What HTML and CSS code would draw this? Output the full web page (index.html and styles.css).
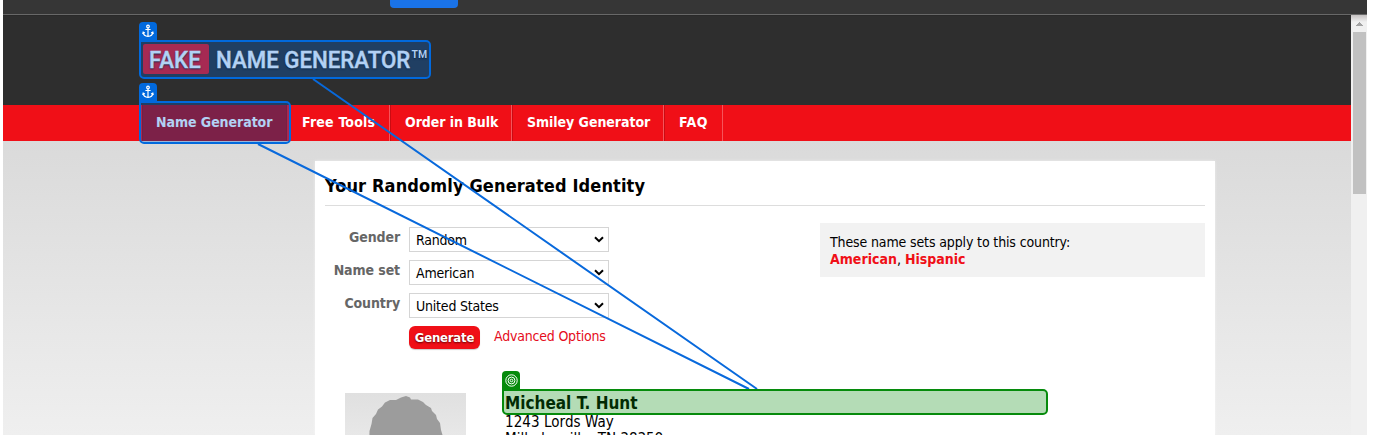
FILE: index.html
```
<!DOCTYPE html>
<html lang="en">
<head>
<meta charset="utf-8">
<title>Fake Name Generator</title>
<link rel="stylesheet" href="styles.css">
</head>
<body>
<div class="window">
  <div class="toolbar"><div class="tab"></div></div>
  <div class="viewport">
    <div class="page">
      <header class="header">
        <div class="logo"><span class="logo-fake"><span class="logo-text">FAKE</span></span><span class="logo-name"><span class="logo-text">NAME GENERATOR</span></span><span class="logo-tm">™</span></div>
      </header>
      <nav class="nav">
        <a class="nav-item active">Name Generator</a>
        <a class="nav-item tools">Free Tools</a>
        <a class="nav-item bulk">Order in Bulk</a>
        <a class="nav-item smiley">Smiley Generator</a>
        <a class="nav-item faq">FAQ</a>
      </nav>
      <main class="main">
        <section class="card">
          <h1 class="title">Your Randomly Generated Identity</h1>
          <div class="columns">
            <form class="form">
              <div class="row"><label class="label">Gender</label><div class="select"><span>Random</span><svg class="chevron" viewBox="0 0 10 7"><path d="M1 1.2l4 4 4-4"/></svg></div></div>
              <div class="row"><label class="label">Name set</label><div class="select"><span>American</span><svg class="chevron" viewBox="0 0 10 7"><path d="M1 1.2l4 4 4-4"/></svg></div></div>
              <div class="row"><label class="label">Country</label><div class="select"><span>United States</span><svg class="chevron" viewBox="0 0 10 7"><path d="M1 1.2l4 4 4-4"/></svg></div></div>
              <div class="actions"><span class="generate">Generate</span><a class="advanced">Advanced Options</a></div>
            </form>
            <aside class="note">
              <div class="note-text">These name sets apply to this country:</div>
              <div><b>American</b>, <b>Hispanic</b></div>
            </aside>
          </div>
          <div class="identity">
            <svg class="avatar" viewBox="0 0 121 60">
              <defs><linearGradient id="silver" x1="0" y1="0" x2="0" y2="1"><stop offset="0" stop-color="#e0e0e0"/><stop offset="1" stop-color="#ebebeb"/></linearGradient></defs>
              <path fill="url(#silver)" d="M0 0h121v60H0z"/>
              <path fill="#9c9c9c" d="M24 60L24.500 38L26.500 31L27.500 25L31 21L33 16.500L37 13.500L40 9.500L45 7L51 7L56 4.500L61 3L65 4.500L66 6.500L73 6.500L78 9L81 12L86 15L87 18L91 22L92 26L95 30L96 37L97.500 42V60z"/>
            </svg>
            <div class="address"><div class="person">Micheal T. Hunt</div><div>1243 Lords Way</div><div class="city">Milledgeville, TN 38359</div></div>
          </div>
        </section>
      </main>
    </div>
    <div class="scrollbar"><svg class="arrow" viewBox="0 0 7 4"><path d="M3 0h1v1h1v1h1v1h1v1H0V3h1V2h1V1h1z"/></svg><div class="thumb"></div></div>
  </div>
</div>

<svg class="links" viewBox="0 0 1378 435"><path d="M313 79L757 389M258 144L749 389"/></svg>
<div class="outline outline-logo"><span class="marker"><svg viewBox="0 0 12 14"><circle cx="6" cy="2.500" r="1.300"/><path d="M6 4v8.300M3.400 5.500h5.200M1.200 8.300c.2 2.600 2 4 4.800 4.200 2.800-.2 4.600-1.600 4.800-4.200M.7 10l.5-1.900 1.700 1M11.300 10l-.5-1.900-1.700 1"/></svg></span></div>
<div class="outline outline-nav"><span class="marker"><svg viewBox="0 0 12 14"><circle cx="6" cy="2.500" r="1.300"/><path d="M6 4v8.300M3.400 5.500h5.200M1.200 8.300c.2 2.600 2 4 4.800 4.200 2.800-.2 4.600-1.600 4.800-4.200M.7 10l.5-1.900 1.700 1M11.300 10l-.5-1.900-1.700 1"/></svg></span></div>
<div class="outline outline-target"><span class="marker marker-target"><svg viewBox="0 0 13 13"><circle cx="6.500" cy="6.500" r="5.700"/><circle cx="6.500" cy="6.500" r="3.400"/><circle cx="6.500" cy="6.500" r="1.300"/></svg></span></div>
</body>
</html>
```
FILE: styles.css
```
* { box-sizing: border-box; }
html, body { margin: 0; height: 435px; overflow: hidden; background: #fff; }
body { position: relative; width: 1378px; font: 14px/17px "DejaVu Sans Condensed", "DejaVu Sans", sans-serif; font-stretch: condensed; color: #000; white-space: nowrap; }
.window { width: 1364px; height: 435px; margin-left: 3px; overflow: hidden; }
.toolbar { height: 15px; background: #363636; border-bottom: 1px solid #686868; padding-left: 387px; }
.tab { width: 68px; height: 8px; background: #1a73e8; border-radius: 0 0 4px 4px; }
.viewport { display: flex; height: 420px; }
.page { width: 1348px; }
.header { height: 90px; background: #2e2e2e; border-top: 1px solid #292929; padding: 28px 0 0 140px; }
.logo { display: flex; align-items: flex-start; color: #fff; font: 500 24px/32px Roboto, sans-serif; text-shadow: 0 1px 2px #000; }
.logo-fake { width: 66px; height: 30px; padding-left: 6px; border-radius: 2px; background: #ee1018; }
.logo-name { width: 194px; margin-left: 7px; }
.logo-text { display: inline-block; transform: scaleX(.927); transform-origin: 0 0; -webkit-text-stroke: .4px #fff; }
.logo-tm { font-size: 31px; font-weight: 400; line-height: 35px; }
.nav { display: flex; height: 36px; padding-left: 139px; background: #f00f17; color: #fff; font-weight: bold; line-height: 34px; }
.nav-item { display: block; padding-left: 14px; border-right: 1px solid #f6545a; border-left: 1px solid #ca0b12; letter-spacing: -.05px; }
.nav-item.active { width: 145px; padding-left: 13px; background: #b20408; border-color: #a00; }
.nav-item.tools { width: 103px; padding-left: 15px; border-left: 0; letter-spacing: .2px; }
.nav-item.bulk { width: 122px; }
.nav-item.smiley { width: 152px; }
.nav-item.faq { width: 59px; letter-spacing: .5px; }
.main { height: 294px; padding: 20px 0 0 312px; background: linear-gradient(#dadada, #efefef); }
.card { width: 900px; height: 274px; padding: 0 10px; background: #fff; box-shadow: 0 0 3px rgba(255,255,255,.5); }
.title { margin: 0; height: 45px; padding-top: 12px; border-bottom: 1px solid #ddd; font-size: 18px; line-height: 25px; letter-spacing: .13px; }
.columns { display: flex; justify-content: space-between; height: 165px; padding-top: 17px; }
.form { width: 300px; padding-top: 4px; }
.row { display: flex; height: 33px; }
.label { width: 75px; margin-right: 9px; text-align: right; font-weight: bold; line-height: 20px; letter-spacing: -.1px; color: #666; }
.select { display: flex; justify-content: space-between; align-items: center; width: 200px; height: 25px; padding: 0 4px 0 6px; border: 1px solid #d5d5d5; letter-spacing: -.2px; }
.select span { padding-top: 2px; }
.chevron { width: 10px; height: 7px; fill: none; stroke: #000; stroke-width: 2; }
.actions { display: flex; padding-left: 84px; }
.generate { width: 71px; height: 23px; margin-right: 14px; border-radius: 6px; background: #f00f17; color: #fff; font-weight: bold; font-size: 13px; line-height: 23px; letter-spacing: -.2px; text-align: center; text-shadow: 0 1px 2px #600; box-shadow: 0 1px 1px #ccc; }
.advanced { line-height: 20px; letter-spacing: -.2px; color: #e50c20; }
.note { width: 385px; height: 54px; padding: 11px 10px; background: #f2f2f2; }
.note-text { letter-spacing: -.13px; }
.note b { color: #f00f17; }
.identity { display: flex; padding: 22px 0 0 20px; font-size: 15px; line-height: 18px; letter-spacing: .07px; }
.avatar { width: 121px; height: 60px; margin-right: 39px; }
.person { height: 20px; font-size: 17px; font-weight: bold; line-height: 21px; letter-spacing: 0; }
.city { line-height: 17px; letter-spacing: 0; }
.scrollbar { width: 16px; padding: 7px 1px 0 2px; background: linear-gradient(#c4c0c0, #f0f0f0 7px); }
.arrow { display: block; width: 7px; height: 4px; margin: 0 auto 6px 3px; fill: #a3a3a3; }
.thumb { width: 13px; height: 162px; background: #c1c1c1; }
.links { position: absolute; left: 0; top: 0; width: 1378px; height: 435px; fill: none; stroke: #0869dc; stroke-width: 2; }
.outline { position: absolute; border: 2px solid #0169dd; border-radius: 5px; background: rgba(0,104,222,.3); }
.outline-logo { left: 139px; top: 40px; width: 292px; height: 39px; border-top-left-radius: 0; }
.outline-nav { left: 139px; top: 101px; width: 152px; height: 43px; border-top-left-radius: 0; }
.outline-target { left: 502px; top: 389px; width: 546px; height: 26px; border-color: #068b0c; border-top-left-radius: 0; background: rgba(6,139,12,.3); }
.marker { position: absolute; left: -2px; top: -20px; display: flex; width: 18px; height: 18px; align-items: center; justify-content: center; border-radius: 4px 4px 0 0; background: #0169dd; }
.marker svg { width: 12px; height: 14px; fill: none; stroke: #fff; stroke-width: 1.2; }
.marker-target { background: #068b0c; }
.marker-target svg { width: 13px; height: 13px; stroke-width: 1; }
```
